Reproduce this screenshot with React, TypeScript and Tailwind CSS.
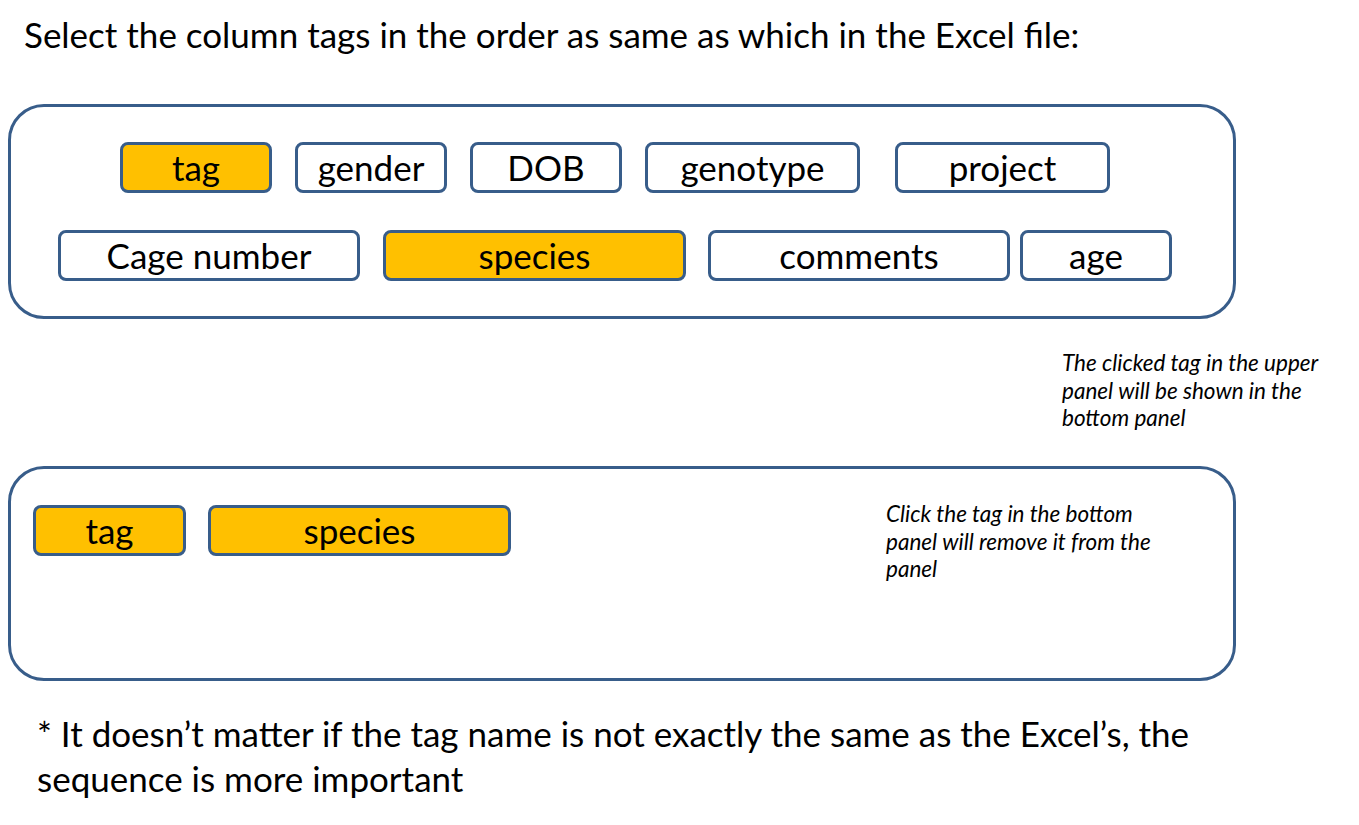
import React from "react";

const font = { fontFamily: "Lato, 'Open Sans', sans-serif" };

function Tag({ label, w, ml, on }: { label: string; w: string; ml: string; on?: boolean }) {
  return (
    <div
      className={`${w} ${ml} h-[51px] shrink-0 rounded-[8px] border-[3px] border-[#385D8A] flex items-center justify-center text-[35px] leading-none text-black ${on ? "bg-[#FFC000]" : "bg-white"}`}
    >
      <span className="-mt-[1px]">{label}</span>
    </div>
  );
}

export default function App() {
  return (
    <div className="w-[1359px] h-[825px] bg-white overflow-hidden relative" style={font}>
      <div className="pl-[24px] pt-[12px] h-[104px] text-[35px] leading-[44px] text-black">
        Select the column tags in the order as same as which in the Excel file:
      </div>

      <div className="ml-[8px] w-[1228px] h-[215px] rounded-[36px] border-[3px] border-[#385D8A] pt-[35px] flex flex-col gap-[37px]">
        <div className="flex">
          <Tag label="tag" w="w-[152px]" ml="ml-[109px]" on />
          <Tag label="gender" w="w-[152px]" ml="ml-[23px]" />
          <Tag label="DOB" w="w-[152px]" ml="ml-[23px]" />
          <Tag label="genotype" w="w-[215px]" ml="ml-[23px]" />
          <Tag label="project" w="w-[215px]" ml="ml-[35px]" />
        </div>
        <div className="flex">
          <Tag label="Cage number" w="w-[302px]" ml="ml-[47px]" />
          <Tag label="species" w="w-[303px]" ml="ml-[23px]" on />
          <Tag label="comments" w="w-[302px]" ml="ml-[22px]" />
          <Tag label="age" w="w-[152px]" ml="ml-[10px]" />
        </div>
      </div>

      <div className="h-[147px] pl-[1062px] pt-[30px]">
        <p className="italic text-[22.5px] leading-[27.5px] text-black w-[290px]">
          The clicked tag in the upper panel will be shown in the bottom panel
        </p>
      </div>

      <div className="ml-[8px] w-[1228px] h-[215px] rounded-[36px] border-[3px] border-[#385D8A] pt-[36px] pl-[22px] flex items-start">
        <Tag label="tag" w="w-[153px]" ml="ml-0" on />
        <Tag label="species" w="w-[303px]" ml="ml-[22px]" on />
        <p className="ml-[375px] -mt-[5px] italic text-[22.5px] leading-[27.5px] text-black w-[275px]">
          Click the tag in the bottom panel will remove it from the panel
        </p>
      </div>

      <div className="pl-[37px] pt-[30px] text-[35px] leading-[45px] text-black w-[1230px]">
        * It doesn’t matter if the tag name is not exactly the same as the Excel’s, the sequence is more important
      </div>
    </div>
  );
}
